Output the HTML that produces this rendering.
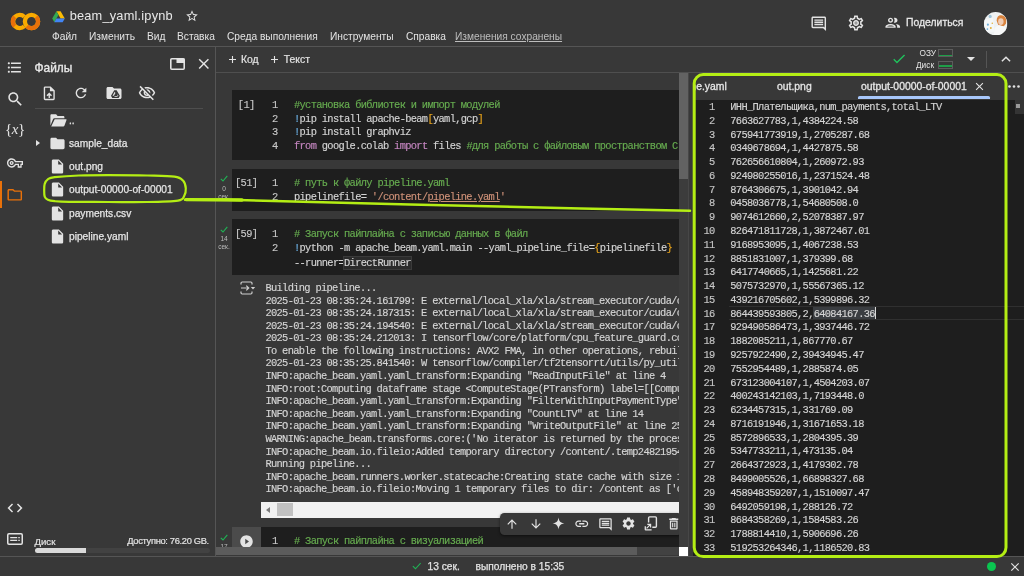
<!DOCTYPE html>
<html lang="ru">
<head>
<meta charset="utf-8">
<title>beam_yaml.ipynb - Colab</title>
<style>
*{box-sizing:border-box;margin:0;padding:0}
html,body{width:1024px;height:576px;overflow:hidden;background:#383838;color:#e3e3e3;font-family:"Liberation Sans",sans-serif}
.abs{position:absolute}
#root{will-change:transform;position:relative;width:1024px;height:576px;overflow:hidden;background:#383838}
.t{position:absolute;white-space:nowrap;line-height:1}
.mono{font-family:"Liberation Mono",monospace}
.code,.out,.ed{-webkit-text-stroke:0.150px currentColor}
/* header */
#hdr{left:0;top:0;width:1024px;height:47px;background:#383838;border-bottom:1px solid #555}
.menu{font-size:10.2px;color:#e3e3e3;top:32.100px}
/* toolbar */
#tb{left:216px;top:47px;width:808px;height:26px;background:#383838;border-bottom:1px solid #4f4f4f}
/* left */
#rail{left:0;top:47px;width:30px;height:509px;background:#383838}
#files{left:30px;top:47px;width:186px;height:509px;background:#383838;border-right:1px solid #555}
.fn{font-size:10.2px;color:#e6e6e6;-webkit-text-stroke:0.250px #e6e6e6}
/* notebook */
#nb{left:216px;top:73px;width:475px;height:483px;background:#383838;overflow:hidden}
.cell{position:absolute;left:16px;width:446.800px;background:#1e1e1e}
.code{position:absolute;white-space:pre;font-family:"Liberation Mono",monospace;font-size:10.4px;letter-spacing:-0.676px;line-height:13.9px;color:#d4d4d4}
.c{color:#67ad50}.k{color:#c586c0}.b{color:#6db3e8}.s{color:#ce9178}.y{color:#eaa51c}
.ln{color:#c8c8c8}
.out{position:absolute;white-space:pre;font-family:"Liberation Mono",monospace;font-size:10.4px;letter-spacing:-0.676px;line-height:12.58px;color:#d5d5d5}
/* right */
#rp{left:693px;top:73px;width:331px;height:483px;background:#1e1e1e;overflow:hidden}
#tabs{left:0;top:0;width:331px;height:26.500px;background:#383838}
.tab{font-size:10.400px;color:#e6e6e6;top:9.200px;-webkit-text-stroke:0.300px #e6e6e6}
.ed{position:absolute;white-space:pre;font-family:"Liberation Mono",monospace;font-size:10.400px;letter-spacing:-0.676px;line-height:13.780px;color:#d4d4d4}
/* status */
#sb{left:0;top:556px;width:1024px;height:20px;background:#383838;border-top:1px solid #555}
</style>
</head>
<body>
<div id="root">

<!-- HEADER -->
<div id="hdr" class="abs">
  <svg class="abs" style="left:10px;top:12px" width="31" height="19" viewBox="0 0 31 19">
    <!-- C -->
    <path d="M14.300 4.700 A6.600 6.600 0 1 0 14.300 14.300" fill="none" stroke="#f9ab00" stroke-width="4.300"/>
    <path d="M4.630 4.830 A6.600 6.600 0 0 0 4.630 14.170" fill="none" stroke="#e8710a" stroke-width="4.300"/>
    <!-- O -->
    <circle cx="21.500" cy="9.500" r="6.600" fill="none" stroke="#f9ab00" stroke-width="4.300"/>
    <path d="M26.170 4.830 A6.600 6.600 0 0 1 16.830 14.170" fill="none" stroke="#e8710a" stroke-width="4.300"/>
  </svg>
  <svg class="abs" style="left:52.300px;top:10.500px" width="13" height="12" viewBox="0 0 13 12">
    <path d="M4.4 0.3 L8.6 0.3 L12.8 7.6 L8.6 7.6 Z" fill="#fbbc04"/>
    <path d="M4.4 0.3 L6.5 3.9 L2.3 11.2 L0.2 7.6 Z" fill="#34a853"/>
    <path d="M4.4 7.6 L12.8 7.6 L10.7 11.2 L2.3 11.2 Z" fill="#4285f4"/>
  </svg>
  <div class="t" style="left:69.700px;top:9.900px;font-size:12.800px;letter-spacing:0.190px;color:#e8e8e8">beam_yaml.ipynb</div>
  <svg class="abs" style="left:185px;top:9px" width="14" height="14" viewBox="0 0 24 24"><path fill="#e3e3e3" d="M22 9.24l-7.19-.62L12 2 9.19 8.63 2 9.24l5.46 4.73L5.82 21 12 17.27 18.18 21l-1.63-7.03L22 9.24zM12 15.4l-3.76 2.27 1-4.28-3.32-2.88 4.38-.38L12 6.1l1.71 4.04 4.38.38-3.32 2.88 1 4.28L12 15.4z"/></svg>
  <div class="t menu" style="left:52px">Файл</div>
  <div class="t menu" style="left:89px">Изменить</div>
  <div class="t menu" style="left:147px">Вид</div>
  <div class="t menu" style="left:177px">Вставка</div>
  <div class="t menu" style="left:227px">Среда выполнения</div>
  <div class="t menu" style="left:330px">Инструменты</div>
  <div class="t menu" style="left:406px">Справка</div>
  <div class="t menu" style="left:455px;color:#bdbdbd;text-decoration:underline">Изменения сохранены</div>

  <svg class="abs" style="left:810px;top:14.500px" width="17.500" height="17.500" viewBox="0 0 24 24"><path fill="#e3e3e3" d="M21.99 4c0-1.1-.89-2-1.99-2H4c-1.1 0-2 .9-2 2v12c0 1.100.9 2 2 2h14l4 4-.01-18zM20 4v13.17L18.830 16H4V4h16zM6 12h12v2H6zm0-3h12v2H6zm0-3h12v2H6z"/></svg>
  <svg class="abs" style="left:847.200px;top:13.800px" width="18" height="18" viewBox="0 0 24 24"><circle cx="12" cy="12" r="2.600" fill="#9a9a9a"/><path fill="#e3e3e3" d="M19.43 12.98c.04-.32.07-.64.07-.98 0-.34-.03-.66-.07-.98l2.110-1.650c.19-.15.24-.42.12-.64l-2-3.460c-.09-.16-.26-.25-.44-.25-.06 0-.12.010-.17.030l-2.490 1c-.52-.4-1.080-.73-1.690-.98l-.38-2.650C14.460 2.180 14.250 2 14 2h-4c-.25 0-.46.180-.49.420l-.38 2.650c-.61.250-1.170.59-1.690.98l-2.490-1c-.06-.02-.12-.03-.18-.03-.17 0-.34.090-.43.250l-2 3.460c-.13.220-.07.490.12.640l2.110 1.650c-.04.320-.07.650-.07.980 0 .33.030.66.070.98l-2.110 1.650c-.19.150-.24.420-.12.640l2 3.460c.09.160.26.250.44.250.06 0 .12-.01.17-.03l2.490-1c.52.4 1.080.73 1.690.98l.38 2.650c.03.240.24.420.49.420h4c.25 0 .46-.18.490-.42l.38-2.650c.61-.25 1.170-.59 1.690-.98l2.490 1c.06.020.12.030.18.030.17 0 .34-.09.43-.25l2-3.460c.12-.22.070-.49-.12-.64l-2.110-1.650zm-1.980-1.710c.04.310.05.520.05.730 0 .21-.02.430-.05.730l-.14 1.130.89.7 1.080.84-.7 1.210-1.270-.51-1.040-.42-.9.68c-.43.320-.84.560-1.250.73l-1.060.43-.16 1.130-.2 1.350h-1.400l-.19-1.350-.16-1.130-1.060-.43c-.43-.18-.83-.41-1.230-.71l-.91-.7-1.060.43-1.270.51-.7-1.210 1.080-.84.890-.7-.14-1.130c-.03-.31-.05-.54-.05-.74s.02-.43.050-.73l.14-1.130-.89-.7-1.080-.84.7-1.210 1.270.51 1.040.42.9-.68c.43-.32.84-.56 1.250-.73l1.060-.43.160-1.130.2-1.350h1.390l.19 1.350.16 1.130 1.060.43c.43.180.83.410 1.230.71l.91.7 1.060-.43 1.270-.51.7 1.210-1.070.85-.89.7.14 1.130zM12 8c-2.210 0-4 1.790-4 4s1.790 4 4 4 4-1.790 4-4-1.790-4-4-4zm0 6c-1.100 0-2-.9-2-2s.9-2 2-2 2 .9 2 2-.9 2-2 2z"/></svg>
  <svg class="abs" style="left:883.800px;top:14.300px" width="17.500" height="17.500" viewBox="0 0 24 24"><path fill="#e3e3e3" d="M9 13.750c-2.340 0-7 1.170-7 3.500V19h14v-1.750c0-2.330-4.660-3.500-7-3.500zM4.340 17c.84-.58 2.870-1.250 4.660-1.250s3.820.67 4.660 1.250H4.340zM9 12c1.930 0 3.500-1.570 3.500-3.500S10.930 5 9 5 5.500 6.570 5.500 8.500 7.070 12 9 12zm0-5c.83 0 1.500.67 1.500 1.500S9.830 10 9 10s-1.500-.67-1.500-1.500S8.170 7 9 7zm7.040 6.810c1.160.84 1.960 1.960 1.960 3.440V19h4v-1.750c0-2.020-3.500-3.170-5.960-3.440zM15 12c1.930 0 3.500-1.570 3.500-3.500S16.930 5 15 5c-.54 0-1.040.13-1.500.35.630.89 1 1.980 1 3.150s-.37 2.260-1 3.150c.46.220.96.350 1.500.35z"/></svg>
  <div class="t" style="left:906px;top:18.400px;font-size:10.400px;color:#e6e6e6;-webkit-text-stroke:0.300px #e6e6e6">Поделиться</div>
  <svg class="abs" style="left:984.400px;top:11.500px" width="23.400" height="23.400" viewBox="0 0 24 24">
    <defs><clipPath id="av"><circle cx="12" cy="12" r="12"/></clipPath></defs>
    <g clip-path="url(#av)">
      <rect width="24" height="24" fill="#eef1f2"/>
      <path d="M13 9 C13 4 16 2.500 19 3.500 C22.500 4.500 23.500 8 22.500 12 L20 15 L14.500 13 Z" fill="#d9843f"/>
      <ellipse cx="17.300" cy="9.800" rx="2.800" ry="3.500" fill="#f0cdb5"/>
      <path d="M10 24 L11 17 C12 14.500 15 13.500 17 14 C20 14 22.500 15.500 24 18 L24 24 Z" fill="#f7f8f8"/>
      <path d="M0 8 L9 6 L11 20 L0 22 Z" fill="#f4f7f8"/>
      <circle cx="6.300" cy="4.500" r="1.600" fill="#9fc3d8"/><circle cx="4" cy="13" r="1.100" fill="#6fb0dc"/><circle cx="7" cy="16.500" r="1" fill="#e2b13c"/><circle cx="3.500" cy="17.500" r="0.900" fill="#6fb0dc"/><circle cx="8.500" cy="11.500" r="0.800" fill="#e2b13c"/>
    </g>
  </svg>
</div>

<!-- TOOLBAR -->
<div id="tb" class="abs">
  <svg class="abs" style="left:12.6px;top:8.500px" width="7" height="7" viewBox="0 0 7 7"><path d="M3.500 0v7M0 3.500h7" stroke="#e3e3e3" stroke-width="1.100" fill="none"/></svg>
  <div class="t" style="left:25px;top:8.400px;font-size:10.400px;color:#e3e3e3;-webkit-text-stroke:0.200px #e3e3e3">Код</div>
  <svg class="abs" style="left:55.2px;top:8.500px" width="7" height="7" viewBox="0 0 7 7"><path d="M3.500 0v7M0 3.500h7" stroke="#e3e3e3" stroke-width="1.100" fill="none"/></svg>
  <div class="t" style="left:67.800px;top:8.400px;font-size:10.400px;color:#e3e3e3;-webkit-text-stroke:0.200px #e3e3e3">Текст</div>
  <svg class="abs" style="left:675.500px;top:5px" width="14" height="14" viewBox="0 0 24 24"><path fill="none" stroke="#20c05c" stroke-width="2.400" d="M3 12.500 L8.500 18 L21.500 5"/></svg>
  <div class="t" style="left:703.500px;top:1.700px;font-size:8.300px;color:#e3e3e3">ОЗУ</div>
  <div class="t" style="left:700px;top:13.900px;font-size:8.300px;color:#e3e3e3">Диск</div>
  <div class="abs" style="left:721.500px;top:1.700px;width:15.500px;height:8.500px;border:1px solid #5c5c5c"><div class="abs" style="left:0;right:0;bottom:0;height:1.400px;background:#1e9e48"></div></div>
  <div class="abs" style="left:721.500px;top:13.700px;width:15.500px;height:8.500px;border:1px solid #5c5c5c"><div class="abs" style="left:0;right:0;bottom:1.700px;height:1.400px;background:#1e9e48"></div></div>
  <div class="abs" style="left:751.300px;top:10.200px;width:0;height:0;border-left:4px solid transparent;border-right:4px solid transparent;border-top:4px solid #e3e3e3"></div>
  <div class="abs" style="left:770px;top:4px;width:1px;height:17px;background:#555"></div>
  <svg class="abs" style="left:783.300px;top:5px" width="14" height="14" viewBox="0 0 24 24"><path fill="none" stroke="#e3e3e3" stroke-width="2.600" d="M5 16 L12 9 L19 16"/></svg>
</div>

<!-- RAIL -->
<div id="rail" class="abs">
  <svg class="abs" style="left:6px;top:11.500px" width="17" height="17" viewBox="0 0 24 24"><path fill="#e3e3e3" d="M4 10.500c-.83 0-1.500.67-1.500 1.500s.67 1.500 1.500 1.500 1.500-.67 1.500-1.500-.67-1.500-1.500-1.500zm0-6c-.83 0-1.500.67-1.500 1.500S3.170 7.500 4 7.500 5.500 6.830 5.500 6 4.830 4.500 4 4.500zm0 12c-.83 0-1.500.68-1.500 1.500s.68 1.500 1.500 1.500 1.500-.68 1.500-1.500-.67-1.500-1.500-1.500zM7 19h14v-2H7v2zm0-6h14v-2H7v2zm0-8v2h14V5H7z"/></svg>
  <svg class="abs" style="left:5.500px;top:42.500px" width="18.500" height="18.500" viewBox="0 0 24 24"><path fill="#e3e3e3" d="M15.500 14h-.79l-.28-.27C15.410 12.590 16 11.110 16 9.500 16 5.910 13.090 3 9.500 3S3 5.910 3 9.500 5.910 16 9.500 16c1.610 0 3.090-.59 4.230-1.570l.27.28v.79l5 4.990L20.490 19l-4.990-5zm-6 0C7.010 14 5 11.990 5 9.500S7.010 5 9.500 5 14 7.010 14 9.500 11.990 14 9.500 14z"/></svg>
  <div class="t" style="left:5px;top:75.300px;font-size:15px;color:#e3e3e3;font-family:'Liberation Serif',serif;letter-spacing:-0.400px">{<i>x</i>}</div>
  <svg class="abs" style="left:6.900px;top:107.900px" width="16" height="16" viewBox="0 0 24 24"><path fill="#e3e3e3" d="M22 19h-6v-4h-2.680c-1.140 2.420-3.600 4-6.320 4-3.860 0-7-3.140-7-7s3.140-7 7-7c2.720 0 5.170 1.580 6.320 4H24v6h-2v4zm-4-2h2v-4h2v-2H11.940l-.23-.67C11.010 8.340 9.110 7 7 7c-2.760 0-5 2.240-5 5s2.240 5 5 5c2.110 0 4.010-1.340 4.710-3.330l.23-.67H18v4zM7 15c-1.650 0-3-1.350-3-3s1.350-3 3-3 3 1.350 3 3-1.350 3-3 3zm0-4c-.55 0-1 .45-1 1s.45 1 1 1 1-.45 1-1-.45-1-1-1z"/></svg>
  <div class="abs" style="left:0;top:134px;width:1.500px;height:27px;background:#e8710a"></div>
  <svg class="abs" style="left:6.300px;top:138.500px" width="17.500" height="17.500" viewBox="0 0 24 24"><path fill="#e8710a" d="M9.170 6l2 2H20v10H4V6h5.170M10 4H4c-1.100 0-1.990.9-1.990 2L2 18c0 1.100.9 2 2 2h16c1.100 0 2-.9 2-2V8c0-1.100-.9-2-2-2h-8l-2-2z"/></svg>
  <svg class="abs" style="left:6px;top:451.500px" width="18" height="18" viewBox="0 0 24 24"><path fill="#e3e3e3" d="M9.400 16.600L4.800 12l4.600-4.600L8 6l-6 6 6 6 1.400-1.400zm5.200 0l4.600-4.600-4.600-4.600L16 6l6 6-6 6-1.400-1.400z"/></svg>
  <svg class="abs" style="left:7px;top:486px" width="16" height="12" viewBox="0 0 16 12"><rect x="0.750" y="0.750" width="14.500" height="10.500" rx="1.200" fill="none" stroke="#e3e3e3" stroke-width="1.500"/><path d="M3.200 4.600h7M11.300 4.600h1.500M3.200 7.400h7M11.300 7.400h1.500" stroke="#e3e3e3" stroke-width="1.300"/></svg>
</div>
<!-- FILES -->
<div id="files" class="abs">
  <div class="t" style="left:4.500px;top:16px;font-size:11.900px;color:#e8e8e8;-webkit-text-stroke:0.350px #e8e8e8">Файлы</div>
  <svg class="abs" style="left:139.700px;top:11px" width="15" height="12" viewBox="0 0 15 12"><rect x="0.800" y="0.800" width="13.400" height="10.400" rx="1" fill="none" stroke="#e3e3e3" stroke-width="1.600"/><rect x="6.500" y="0.500" width="8" height="4.500" fill="#e3e3e3"/></svg>
  <svg class="abs" style="left:164.500px;top:8.100px" width="17.600" height="17.600" viewBox="0 0 24 24"><path fill="#e3e3e3" d="M19 6.410L17.590 5 12 10.590 6.410 5 5 6.410 10.590 12 5 17.590 6.410 19 12 13.410 17.590 19 19 17.590 13.410 12z"/></svg>

  <svg class="abs" style="left:10.500px;top:37.500px" width="16.500" height="16.500" viewBox="0 0 24 24"><path fill="#e3e3e3" d="M14 2H6c-1.100 0-1.990.9-1.990 2L4 20c0 1.100.89 2 1.990 2H18c1.100 0 2-.9 2-2V8l-6-6zm4 18H6V4h7v5h5v11zM8 15.010l1.410 1.410L11 14.840V19h2v-4.160l1.590 1.590L16 15.010 12.010 11z"/></svg>
  <svg class="abs" style="left:43px;top:37.700px" width="16" height="16" viewBox="0 0 24 24"><path fill="#e3e3e3" d="M17.650 6.350C16.200 4.900 14.210 4 12 4c-4.420 0-7.990 3.580-7.990 8s3.570 8 7.990 8c3.730 0 6.840-2.550 7.730-6h-2.080c-.82 2.330-3.040 4-5.650 4-3.310 0-6-2.690-6-6s2.690-6 6-6c1.660 0 3.140.69 4.220 1.780L13 11h7V4l-2.350 2.350z"/></svg>
  <svg class="abs" style="left:74.700px;top:37px" width="18" height="18" viewBox="0 0 24 24"><path fill="#e3e3e3" d="M10 4H4c-1.100 0-1.990.9-1.990 2L2 18c0 1.100.9 2 2 2h16c1.100 0 2-.9 2-2V8c0-1.100-.9-2-2-2h-8l-2-2z"/><path fill="#383838" d="M12.300 8.400h3.200l4.300 7.400-1.600 2.800H9.600L8 15.800zM12.900 10.400l-2.900 5.100h1.900l2-3.500zM15 10.400l2 3.500-.9 1.600h1.900zM12.400 16.900h4.600l-.5-.9h-3.600z"/></svg>
  <svg class="abs" style="left:108px;top:37px" width="18" height="18" viewBox="0 0 24 24"><path fill="#e3e3e3" d="M12 6c3.790 0 7.170 2.130 8.820 5.500-.59 1.220-1.420 2.270-2.410 3.120l1.410 1.410c1.390-1.230 2.490-2.770 3.180-4.530C21.270 7.110 17 4 12 4c-1.270 0-2.490.2-3.640.57l1.650 1.650C10.660 6.090 11.320 6 12 6zm-1.070 1.140L13 9.210c.57.250 1.030.71 1.280 1.280l2.070 2.070c.08-.34.140-.7.140-1.070C16.500 9.010 14.480 7 12 7c-.37 0-.72.050-1.070.14zM2.010 3.870l2.680 2.680C3.060 7.830 1.770 9.530 1 11.500 2.730 15.890 7 19 12 19c1.520 0 2.980-.29 4.320-.82l3.420 3.420 1.410-1.410L3.420 2.450 2.010 3.870zm7.500 7.500l2.610 2.610c-.04.010-.08.020-.12.020-1.380 0-2.500-1.120-2.500-2.500 0-.05.010-.08.010-.13zm-3.400-3.400l1.750 1.750c-.23.550-.36 1.150-.36 1.780 0 2.480 2.020 4.500 4.500 4.500.63 0 1.230-.13 1.770-.36l.98.980c-.88.240-1.800.38-2.750.38-3.790 0-7.170-2.130-8.820-5.500.7-1.430 1.720-2.610 2.930-3.530z"/></svg>
  <div class="abs" style="left:4.500px;top:60.500px;width:168.500px;height:1px;background:#4e4e4e"></div>

  <svg class="abs" style="left:20px;top:66.500px" width="17" height="13" viewBox="0 0 17 13"><path fill="#e3e3e3" d="M1.500 0.300h4.600l1.500 1.600h5.600c.7 0 1.200.5 1.200 1.200v1.100H4.600c-.8 0-1.400.4-1.700 1.200L0.400 11.600V1.400C.4.800.9.300 1.500.300z"/><path fill="#e3e3e3" d="M4.700 5.200h11.200c.5 0 .8.400.6.900l-2.100 5.600c-.2.500-.6.800-1.100.800H1.200z"/></svg>
  <div class="t fn" style="left:39px;top:68.800px">..</div>

  <div class="abs" style="left:5.500px;top:92.800px;width:0;height:0;border-top:3.500px solid transparent;border-bottom:3.500px solid transparent;border-left:4.200px solid #e3e3e3"></div>
  <svg class="abs" style="left:19px;top:87.500px" width="17" height="17" viewBox="0 0 24 24"><path fill="#e3e3e3" d="M10 4H4c-1.100 0-1.990.9-1.990 2L2 18c0 1.100.9 2 2 2h16c1.100 0 2-.9 2-2V8c0-1.100-.9-2-2-2h-8l-2-2z"/></svg>
  <div class="t fn" style="left:39px;top:92px">sample_data</div>

  <svg class="abs" style="left:18.700px;top:110.500px" width="17" height="17" viewBox="0 0 24 24"><path fill="#e3e3e3" d="M6 2c-1.100 0-1.990.9-1.990 2L4 20c0 1.100.89 2 1.990 2H18c1.100 0 2-.9 2-2V8l-6-6H6zm7 7V3.500L18.500 9H13z"/></svg>
  <div class="t fn" style="left:39px;top:115.300px">out.png</div>

  <svg class="abs" style="left:18.700px;top:134px" width="17" height="17" viewBox="0 0 24 24"><path fill="#e3e3e3" d="M6 2c-1.100 0-1.990.9-1.990 2L4 20c0 1.100.89 2 1.990 2H18c1.100 0 2-.9 2-2V8l-6-6H6zm7 7V3.500L18.500 9H13z"/></svg>
  <div class="t fn" style="left:39px;top:137.500px">output-00000-of-00001</div>

  <svg class="abs" style="left:18.700px;top:157.500px" width="17" height="17" viewBox="0 0 24 24"><path fill="#e3e3e3" d="M6 2c-1.100 0-1.990.9-1.990 2L4 20c0 1.100.89 2 1.990 2H18c1.100 0 2-.9 2-2V8l-6-6H6zm7 7V3.500L18.500 9H13z"/></svg>
  <div class="t fn" style="left:39px;top:161.500px">payments.csv</div>

  <svg class="abs" style="left:18.700px;top:180.500px" width="17" height="17" viewBox="0 0 24 24"><path fill="#e3e3e3" d="M6 2c-1.100 0-1.990.9-1.990 2L4 20c0 1.100.89 2 1.990 2H18c1.100 0 2-.9 2-2V8l-6-6H6zm7 7V3.500L18.500 9H13z"/></svg>
  <div class="t fn" style="left:39px;top:184.500px">pipeline.yaml</div>

  <div class="t" style="left:4.500px;top:490px;font-size:9.600px;color:#e3e3e3;-webkit-text-stroke:0.200px #e3e3e3">Диск</div>
  <div class="t" style="right:6.200px;top:490.200px;font-size:9.300px;letter-spacing:-0.320px;color:#e3e3e3;-webkit-text-stroke:0.200px #e3e3e3">Доступно: 76.20 GB.</div>
  <div class="abs" style="left:4.500px;top:501px;width:175px;height:5px;border-radius:2.500px;background:#424242"></div>
  <div class="abs" style="left:4.500px;top:501px;width:51.500px;height:5px;border-radius:2.500px 0 0 2.500px;background:#dadada"></div>
</div>
<!-- NOTEBOOK -->
<div id="nb" class="abs">
  <!-- cell 1 -->
  <div class="cell" style="top:17px;height:70px"></div>
  <div class="code ln" style="left:15.200px;width:30px;top:26.300px;line-height:13.600px;text-align:center">[1]</div>
  <div class="code ln" style="left:40px;width:21.500px;top:26.300px;line-height:13.600px;text-align:right">1
2
3
4</div>
  <div class="code" style="left:78px;top:26.300px;line-height:13.600px;width:383.600px;overflow:hidden"><span class="c">#установка библиотек и импорт модулей</span>
<span class="b">!</span>pip install apache-beam<span class="y">[</span>yaml,gcp<span class="y">]</span>
<span class="b">!</span>pip install graphviz
<span class="k">from</span> google.colab <span class="k">import</span> files <span class="c">#для работы с файловым пространством Colab</span></div>

  <!-- cell 2 -->
  <div class="cell" style="top:95.700px;height:42px"></div>
  <svg class="abs" style="left:4.300px;top:102.300px" width="8" height="7" viewBox="0 0 8 7"><path d="M0.800 3.800 L3 6 L7.300 0.900" fill="none" stroke="#1fb455" stroke-width="1.100"/></svg>
  <div class="t" style="left:0;width:16px;text-align:center;top:113px;font-size:6.500px;color:#bdbdbd">0</div>
  <div class="t" style="left:0;width:16px;text-align:center;top:120.500px;font-size:6.500px;color:#bdbdbd">сек.</div>
  <div class="code ln" style="left:15.200px;width:30px;top:103.100px;line-height:14.100px;text-align:center">[51]</div>
  <div class="code ln" style="left:40px;width:21.500px;top:103.100px;line-height:14.100px;text-align:right">1
2</div>
  <div class="code" style="left:78px;top:103.100px;line-height:14.100px;width:383.600px;overflow:hidden"><span class="c"># путь к файлу pipeline.yaml</span>
pipelinefile= <span class="s">'/content/<u>pipeline.yaml</u>'</span></div>

  <!-- cell 3 -->
  <div class="cell" style="top:146px;height:55.500px"></div>
  <svg class="abs" style="left:4.300px;top:152.800px" width="8" height="7" viewBox="0 0 8 7"><path d="M0.800 3.800 L3 6 L7.300 0.900" fill="none" stroke="#1fb455" stroke-width="1.100"/></svg>
  <div class="t" style="left:0;width:16px;text-align:center;top:162.500px;font-size:6.500px;color:#bdbdbd">14</div>
  <div class="t" style="left:0;width:16px;text-align:center;top:171px;font-size:6.500px;color:#bdbdbd">сек.</div>
  <div class="code ln" style="left:15.200px;width:30px;top:154.100px;line-height:14.200px;text-align:center">[59]</div>
  <div class="code ln" style="left:40px;width:21.500px;top:154.100px;line-height:14.200px;text-align:right">1
2</div>
  <div class="code" style="left:78px;top:154.100px;line-height:14.200px;width:383.600px;overflow:hidden"><span class="c"># Запуск пайплайна с записью данных в файл</span>
<span class="b">!</span>python -m apache_beam.yaml.main --yaml_pipeline_file=<span class="y">{</span>pipelinefile<span class="y">}</span>
--runner=<span style="background:#2b2b2b;outline:1px solid #3a3a3a">DirectRunner</span></div>

  <!-- output -->
  <svg class="abs" style="left:23.500px;top:207.500px" width="16" height="14" viewBox="0 0 16 14"><path d="M1 3.500V2.200C1 1.500 1.500 1 2.200 1h8.600c.7 0 1.200.5 1.200 1.200v1.300M1 10.500v1.300c0 .7.500 1.200 1.200 1.200h8.600c.7 0 1.200-.5 1.200-1.200v-1.300M1 7h7.500M6.300 4.600L8.700 7 6.300 9.400" fill="none" stroke="#d0d0d0" stroke-width="1.200"/><path d="M10.800 6h4.400l-2.200 2.600z" fill="#d0d0d0"/></svg>
  <div class="out" style="left:49.400px;top:209px;width:413.400px;overflow:hidden">Building pipeline...
2025-01-23 08:35:24.161799: E external/local_xla/xla/stream_executor/cuda/cuda_fft.cc
2025-01-23 08:35:24.187315: E external/local_xla/xla/stream_executor/cuda/cuda_dnn.cc
2025-01-23 08:35:24.194540: E external/local_xla/xla/stream_executor/cuda/cuda_blas.cc
2025-01-23 08:35:24.212013: I tensorflow/core/platform/cpu_feature_guard.cc:210]
To enable the following instructions: AVX2 FMA, in other operations, rebuild TensorFlow
2025-01-23 08:35:25.841540: W tensorflow/compiler/tf2tensorrt/utils/py_utils.cc:38]
INFO:apache_beam.yaml.yaml_transform:Expanding "ReadInputFile" at line 4
INFO:root:Computing dataframe stage &lt;ComputeStage(PTransform) label=[[ComputedExpression
INFO:apache_beam.yaml.yaml_transform:Expanding "FilterWithInputPaymentType" at line 9
INFO:apache_beam.yaml.yaml_transform:Expanding "CountLTV" at line 14
INFO:apache_beam.yaml.yaml_transform:Expanding "WriteOutputFile" at line 25
WARNING:apache_beam.transforms.core:('No iterator is returned by the process method
INFO:apache_beam.io.fileio:Added temporary directory /content/.temp2482195410
Running pipeline...
INFO:apache_beam.runners.worker.statecache:Creating state cache with size 104857600
INFO:apache_beam.io.fileio:Moving 1 temporary files to dir: /content as ['output-00000-of-00001']</div>

  <!-- output h-scrollbar -->
  <div class="abs" style="left:44.800px;top:429px;width:418px;height:15.500px;background:#f1f1f1"></div>
  <div class="abs" style="left:61px;top:430.200px;width:16px;height:13.300px;background:#c1c1c1"></div>
  <div class="abs" style="left:50.300px;top:433.500px;width:0;height:0;border-top:3.300px solid transparent;border-bottom:3.300px solid transparent;border-right:4px solid #7a7a7a"></div>

  <!-- last cell -->
  <div class="abs" style="left:15.800px;top:454px;width:29px;height:22px;background:#4b4b4b"></div>
  <div class="abs" style="left:44.800px;top:454px;width:418px;height:22px;background:#1e1e1e"></div>
  <svg class="abs" style="left:4.300px;top:461px" width="8" height="7" viewBox="0 0 8 7"><path d="M0.800 3.800 L3 6 L7.300 0.900" fill="none" stroke="#1fb455" stroke-width="1.100"/></svg>
  <div class="t" style="left:0;width:16px;text-align:center;top:470.500px;font-size:6.500px;color:#bdbdbd">17</div>
  <svg class="abs" style="left:23px;top:460.500px" width="15" height="15" viewBox="0 0 24 24"><path fill="#e3e3e3" d="M12 2C6.480 2 2 6.480 2 12s4.480 10 10 10 10-4.480 10-10S17.520 2 12 2zm-2 14.500v-9l6 4.500-6 4.500z"/></svg>
  <div class="code ln" style="left:40px;width:21.500px;top:461.500px;text-align:right">1</div>
  <div class="code" style="left:78px;top:461.500px"><span class="c"># Запуск пайплайна с визуализацией</span></div>

  <!-- cell toolbar -->
  <div class="abs" style="left:284.300px;top:439.500px;width:182px;height:22.300px;background:#383838;border-radius:4.500px;box-shadow:0 1px 3px rgba(0,0,0,.55)">
    <svg class="abs" style="left:4.800px;top:4.200px" width="14" height="14" viewBox="0 0 24 24"><path fill="#e3e3e3" d="M4 12l1.410 1.410L11 7.830V20h2V7.830l5.580 5.590L20 12l-8-8-8 8z"/></svg>
    <svg class="abs" style="left:28.300px;top:4.200px" width="14" height="14" viewBox="0 0 24 24"><path fill="#e3e3e3" d="M20 12l-1.410-1.410L13 16.170V4h-2v12.170l-5.580-5.590L4 12l8 8 8-8z"/></svg>
    <svg class="abs" style="left:51px;top:3.600px" width="15" height="15" viewBox="0 0 24 24"><path fill="#e3e3e3" d="M12 2.500C12.900 8.800 15.200 11.100 21.500 12 15.200 12.900 12.900 15.200 12 21.500 11.100 15.200 8.800 12.900 2.500 12 8.800 11.100 11.100 8.800 12 2.500Z"/></svg>
    <svg class="abs" style="left:74.200px;top:3.700px" width="15.500" height="15.500" viewBox="0 0 24 24"><path fill="#e3e3e3" d="M3.900 12c0-1.710 1.390-3.100 3.100-3.100h4V7H7c-2.760 0-5 2.240-5 5s2.240 5 5 5h4v-1.900H7c-1.710 0-3.100-1.390-3.100-3.100zM8 13h8v-2H8v2zm9-6h-4v1.900h4c1.710 0 3.100 1.390 3.100 3.100s-1.390 3.100-3.100 3.100h-4V17h4c2.760 0 5-2.240 5-5s-2.240-5-5-5z"/></svg>
    <svg class="abs" style="left:97.500px;top:4px" width="15" height="15" viewBox="0 0 24 24"><path fill="#e3e3e3" d="M21.990 4c0-1.100-.89-2-1.990-2H4c-1.100 0-2 .9-2 2v12c0 1.100.9 2 2 2h14l4 4-.01-18zM20 4v13.170L18.830 16H4V4h16zM6 12h12v2H6zm0-3h12v2H6zm0-3h12v2H6z"/></svg>
    <svg class="abs" style="left:120.800px;top:3.700px" width="15" height="15" viewBox="0 0 24 24"><path fill="#e3e3e3" d="M19.140 12.940c.04-.3.060-.61.060-.94 0-.32-.02-.64-.07-.94l2.030-1.580c.18-.14.23-.41.120-.61l-1.920-3.320c-.12-.22-.37-.29-.59-.22l-2.390.96c-.5-.38-1.030-.7-1.620-.94l-.36-2.540c-.04-.24-.24-.41-.48-.41h-3.840c-.24 0-.43.17-.47.41l-.36 2.540c-.59.24-1.130.57-1.620.94l-2.390-.96c-.22-.08-.47 0-.59.22L2.740 8.870c-.12.210-.08.47.12.610l2.030 1.580c-.05.3-.09.630-.09.940s.02.640.07.940l-2.030 1.580c-.18.140-.23.410-.12.610l1.920 3.320c.12.220.37.290.59.220l2.390-.96c.5.380 1.030.7 1.620.94l.36 2.540c.05.240.24.410.48.410h3.840c.24 0 .44-.17.470-.41l.36-2.540c.59-.24 1.130-.56 1.620-.94l2.390.96c.22.080.47 0 .59-.22l1.920-3.320c.12-.22.070-.47-.12-.61l-2.010-1.580zM12 15.600c-1.980 0-3.600-1.620-3.600-3.600s1.620-3.600 3.600-3.600 3.600 1.620 3.600 3.600-1.620 3.600-3.600 3.600z"/></svg>
    <svg class="abs" style="left:144px;top:3px" width="14" height="15" viewBox="0 0 14 15"><path d="M4.600 6.500V1.900c0-.6.400-1 1-1h5.800c.6 0 1 .4 1 1v8.400c0 .6-.4 1-1 1H8.300" fill="none" stroke="#e3e3e3" stroke-width="1.400"/><path d="M1.300 10.200v3.200c0 .3.200.5.500.5h5.800" fill="none" stroke="#e3e3e3" stroke-width="1.300"/><path d="M2.600 12.300l3.600-3.600M3.300 8.300h3.300v3.300" fill="none" stroke="#e3e3e3" stroke-width="1.200"/></svg>
    <svg class="abs" style="left:166.200px;top:3.600px" width="15.500" height="15.500" viewBox="0 0 24 24"><path fill="#e3e3e3" d="M16 9v10H8V9h8m-1.500-6h-5l-1 1H5v2h14V4h-3.500l-1-1zM18 7H6v12c0 1.100.9 2 2 2h8c1.100 0 2-.9 2-2V7zM9.500 10.500h1.700v7H9.500zM12.800 10.500h1.700v7h-1.700z"/></svg>
  </div>

  <!-- v scrollbar -->
  <div class="abs" style="left:463px;top:0;width:8.500px;height:475px;background:#3c3c3c"></div>
  <div class="abs" style="left:471.500px;top:0;width:1px;height:483px;background:#474747"></div>
  <div class="abs" style="left:463.200px;top:0;width:9px;height:106px;background:#626262"></div>
  <!-- h scrollbar -->
  <div class="abs" style="left:0;top:474.200px;width:462.800px;height:8.300px;background:#424242"></div>
  <div class="abs" style="left:0;top:474.200px;width:420.500px;height:8.300px;background:#5c5c5c"></div>
  <div class="abs" style="left:462.800px;top:474px;width:9.200px;height:8.600px;background:#fff"></div>
</div>
<!-- RIGHT PANEL -->
<div id="rp" class="abs">
  <div id="tabs" class="abs">
    <div class="t tab" style="left:-26.900px">pipeline.yaml</div>
    <div class="t tab" style="left:84px">out.png</div>
    <div class="t tab" style="left:168px">output-00000-of-00001</div>
    <svg class="abs" style="left:279.5px;top:6.600px" width="13" height="13" viewBox="0 0 24 24"><path fill="#e3e3e3" d="M19 6.410L17.590 5 12 10.590 6.410 5 5 6.410 10.590 12 5 17.590 6.410 19 12 13.410 17.590 19 19 17.590 13.410 12z"/></svg>
    <div class="abs" style="left:165px;top:23.300px;width:131.500px;height:3.200px;border-radius:1.600px 1.600px 0 0;background:#a8c7fa"></div>
    <svg class="abs" style="left:314.5px;top:11.500px" width="12" height="3" viewBox="0 0 12 3"><circle cx="1.500" cy="1.500" r="1.300" fill="#e3e3e3"/><circle cx="6" cy="1.500" r="1.300" fill="#e3e3e3"/><circle cx="10.500" cy="1.500" r="1.300" fill="#e3e3e3"/></svg>
  </div>
  <!-- current line -->
  <div class="abs" style="left:36px;top:233px;width:296px;height:13.800px;border-top:1px solid #303030;border-bottom:1px solid #303030"></div>
  <div class="abs" style="left:120.3px;top:234px;width:62px;height:12px;background:#3a3d41"></div>
  <div class="abs" style="left:182.3px;top:234px;width:1px;height:12px;background:#d8d8d8"></div>
  <div class="ed" style="left:0;width:21.500px;top:27.950px;text-align:right;color:#c6c6c6">1
2
3
4
5
6
7
8
9
10
11
12
13
14
15
16
17
18
19
20
21
22
23
24
25
26
27
28
29
30
31
32
33</div>
  <div class="ed" style="left:37.3px;top:27.950px">ИНН_Плательщика,num_payments,total_LTV
7663627783,1,4384224.58
675941773919,1,2705287.68
0349678694,1,4427875.58
762656610804,1,260972.93
924980255016,1,2371524.48
8764306675,1,3901042.94
0458036778,1,54680508.0
9074612660,2,52078387.97
826471811728,1,3872467.01
9168953095,1,4067238.53
8851831007,1,379399.68
6417740665,1,1425681.22
5075732970,1,55567365.12
439216705602,1,5399896.32
864439593805,2,64084167.36
929490586473,1,3937446.72
1882085211,1,867770.67
9257922490,2,39434945.47
7552954489,1,2885874.05
673123004107,1,4504203.07
400243142103,1,7193448.0
6234457315,1,331769.09
8716191946,1,31671653.18
8572896533,1,2804395.39
5347733211,1,473135.04
2664372923,1,4179302.78
8499005526,1,66898327.68
458948359207,1,1510097.47
6492059198,1,288126.72
8684358269,1,1584583.26
1788814410,1,5906696.26
519253264346,1,1186520.83</div>
  <!-- minimap slider -->
  <div class="abs" style="left:322px;top:27px;width:10px;height:14px;background:#343434"></div>
  <div class="abs" style="left:322.7px;top:31.200px;width:4px;height:4px;background:#9a9a9a"></div>
</div>
<!-- STATUS -->
<div id="sb" class="abs">
  <svg class="abs" style="left:411.800px;top:5.300px" width="9.500" height="7.800" viewBox="0 0 11 9"><path d="M1 4.800 L4 7.800 L10 1.200" fill="none" stroke="#1fb455" stroke-width="1.250"/></svg>
  <div class="t" style="left:427.500px;top:4.500px;font-size:10.200px;color:#e3e3e3;-webkit-text-stroke:0.250px #e3e3e3">13 сек.</div>
  <div class="t" style="left:475.500px;top:4.500px;font-size:10.200px;color:#e3e3e3;-webkit-text-stroke:0.250px #e3e3e3">выполнено в 15:35</div>
  <div class="abs" style="left:987.200px;top:5.200px;width:9px;height:9px;border-radius:50%;background:#0ac550"></div>
  <svg class="abs" style="left:1008px;top:3px" width="14" height="14" viewBox="0 0 24 24"><path fill="#e3e3e3" d="M19 6.410L17.590 5 12 10.590 6.410 5 5 6.410 10.590 12 5 17.590 6.410 19 12 13.410 17.590 19 19 17.590 13.410 12z"/></svg>
</div>
<!-- OVERLAY -->
<svg id="ov" class="abs" style="left:0;top:0;pointer-events:none" width="1024" height="576" viewBox="0 0 1024 576">
  <path d="M44.2 190.3 C44.2 188.2 44.1 185.7 44.7 183.9 C45.3 182.1 46.1 180.4 47.8 179.3 C49.5 178.2 49.5 177.8 54.7 177.2 C59.9 176.6 69.9 175.8 78.8 175.5 C87.7 175.2 96.7 175.1 108.1 175.1 C119.5 175.1 136.1 175.2 147.2 175.5 C158.3 175.8 168.5 175.8 174.5 176.7 C180.5 177.5 181.1 178.6 183.0 180.6 C184.9 182.6 185.6 185.8 185.8 188.4 C186.0 191.0 185.3 194.3 184.0 196.3 C182.7 198.3 184.1 199.7 178.0 200.6 C171.9 201.5 158.8 201.8 147.2 202.0 C135.5 202.2 121.1 202.0 108.1 202.0 C95.1 202.0 78.0 201.9 69.1 201.8 C60.2 201.7 58.2 201.5 54.7 201.2 C51.2 200.9 49.5 200.6 47.8 199.8 C46.1 199.1 45.3 198.3 44.7 196.7 C44.1 195.1 44.2 192.4 44.2 190.3Z" fill="none" stroke="#b4ee14" stroke-width="2.200"/>
  <path d="M185 199.700 L228 199.700 C300 201.500 360 203.200 410 204.600 S600 208.800 690 210.700" fill="none" stroke="#b4ee14" stroke-width="2.500" stroke-linecap="round"/>
  <path d="M186 199.600 L242 200" fill="none" stroke="#b4ee14" stroke-width="3.400" stroke-linecap="round"/>
  <rect x="694.200" y="74.600" width="311.800" height="482" rx="9" ry="9" fill="none" stroke="#b4ee14" stroke-width="3"/>
</svg>

</div>
</body>
</html>
